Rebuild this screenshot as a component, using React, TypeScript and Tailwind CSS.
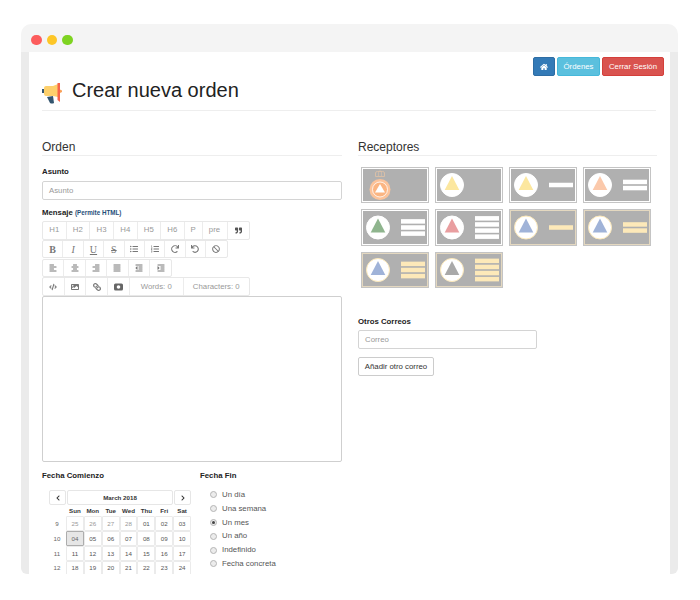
import {
  FaAlignCenter,
  FaAlignJustify,
  FaAlignLeft,
  FaAlignRight,
  FaBan,
  FaChevronLeft,
  FaChevronRight,
  FaCode,
  FaHome,
  FaImage,
  FaIndent,
  FaLink,
  FaListOl,
  FaListUl,
  FaOutdent,
  FaQuoteRight,
  FaRedo,
  FaUndo,
} from "react-icons/fa";
import type { ReactNode } from "react";

const sans = "font-['Liberation_Sans',Arial,sans-serif]";
const serif = "font-['Liberation_Serif',serif]";

function Megaphone() {
  return (
    <svg width="21" height="22" viewBox="0 0 21 22">
      <path d="M5 15 L11 14 L12 21 Q10 22 8 21 Z" fill="#34566f" />
      <path d="M0 7 L2 7 L2 11 L0 11 Z" fill="#34566f" />
      <path d="M2 6 Q2 4 4 4 L11 4 L16 2 L16 15 L11 14 L4 14 Q2 14 2 12 Z" fill="#fdd06c" />
      <path d="M15.5 1 L18 1 L18 20 L15.5 18 Z" fill="#f7654a" />
      <path d="M18 7.5 L20 8.5 L20 10 L18 11 Z" fill="#f9a15a" />
    </svg>
  );
}

type SignProps = {
  tri: string;
  bars: number;
  bar?: string;
  frame?: string;
  ring?: string;
  crown?: boolean;
  tall?: boolean;
};

function Sign({ tri, bars, bar = "#fff", frame = "#fff", ring = "#fff", crown, tall }: SignProps) {
  const h = tall ? 37 : 36;
  const total = bars * 4.5 + (bars - 1) * 1.6;
  const start = h / 2 - total / 2;
  const c = h / 2;
  return (
    <svg width="68" height={h} viewBox={`0 0 68 ${h}`} className="block">
      <rect x="0.5" y="0.5" width="67" height={h - 1} fill="#b0b0b0" stroke="#c4c4c4" />
      <rect x="1.5" y="1.5" width="65" height={h - 3} fill="#b0b0b0" stroke={frame} />
      {crown ? (
        <>
          <circle cx="19" cy="22.5" r="10.5" fill="#fcc39a" />
          <circle cx="19" cy="22.5" r="7.5" fill="#fbb582" stroke="#fff" strokeWidth="0.8" />
          <path d="M19 17 L24 25.5 L14 25.5 Z" fill="#fff" />
          <path d="M14.5 9.5 L14.5 6 Q14.5 4.5 16.5 4.5 L21.5 4.5 Q23.5 4.5 23.5 6 L23.5 9.5 Z" fill="none" stroke="#d8bfa8" />
          <path d="M17.5 5 L17.5 9 M20.5 5 L20.5 9 M19 4.5 L19 2.5" stroke="#d8bfa8" strokeWidth="0.7" />
        </>
      ) : (
        <>
          <circle cx="17" cy={c} r="11.5" fill="#fff" stroke={ring} />
          <path d={`M17 ${c - 9} L24.3 ${c + 5} L9.7 ${c + 5} Z`} fill={tri} />
        </>
      )}
      {Array.from({ length: bars }).map((_, i) => (
        <rect key={i} x="40" y={start + i * 6.1} width="24" height="4.5" fill={bar} />
      ))}
    </svg>
  );
}

const cream = "#fde9b9";

const signs: SignProps[] = [
  { tri: "", bars: 0, crown: true },
  { tri: "#fce79f", bars: 0 },
  { tri: "#fce79f", bars: 1 },
  { tri: "#fbc9ab", bars: 2 },
  { tri: "#8fb58e", bars: 3, tall: true },
  { tri: "#e99ea0", bars: 4, tall: true },
  { tri: "#a0b3d8", bars: 1, bar: cream, frame: "#e4d8c0", ring: cream, tall: true },
  { tri: "#a0b3d8", bars: 2, bar: cream, frame: "#e4d8c0", ring: cream, tall: true },
  { tri: "#a0b3d8", bars: 3, bar: cream, frame: "#e4d8c0", ring: cream },
  { tri: "#a9a9a9", bars: 4, bar: cream, frame: "#e4d8c0", ring: cream },
];

function Tool({ w, children }: { w: string; children: ReactNode }) {
  return (
    <div className={`${w} flex items-center justify-center h-full border-r border-[#ececec] last:border-r-0 text-[7.8px] text-[#999]`}>
      {children}
    </div>
  );
}

function ToolRow({ children }: { children: ReactNode }) {
  return <div className="flex w-fit h-[18.5px] border border-[#e8e8e8] rounded-[2px] bg-white">{children}</div>;
}

const icon = "text-[8px] text-[#777]";
const letter = `${serif} text-[10px] text-[#777]`;

const weeks = [
  { n: 9, days: ["25", "26", "27", "28", "01", "02", "03"] },
  { n: 10, days: ["04", "05", "06", "07", "08", "09", "10"] },
  { n: 11, days: ["11", "12", "13", "14", "15", "16", "17"] },
  { n: 12, days: ["18", "19", "20", "21", "22", "23", "24"] },
];

const heads = ["Sun", "Mon", "Tue", "Wed", "Thu", "Fri", "Sat"];

const options = ["Un día", "Una semana", "Un mes", "Un año", "Indefinido", "Fecha concreta"];

function Calendar() {
  return (
    <div className="ml-[7px] mt-[9px] w-[142px]">
      <div className="flex gap-[1px] h-[15px] text-[#333]">
        <div className="w-[17px] border border-[#e6e6e6] rounded-[2px] flex items-center justify-center">
          <FaChevronLeft className="text-[6px]" />
        </div>
        <div className="flex-1 border border-[#e6e6e6] rounded-[2px] flex items-center justify-center text-[6.2px] font-bold">
          March 2018
        </div>
        <div className="w-[17px] border border-[#e6e6e6] rounded-[2px] flex items-center justify-center">
          <FaChevronRight className="text-[6px]" />
        </div>
      </div>
      <div className="flex h-[11px] items-center text-[6.2px] font-bold text-[#333]">
        <div className="w-[17px]" />
        {heads.map((d) => (
          <div key={d} className="w-[17.86px] text-center">
            {d}
          </div>
        ))}
      </div>
      {weeks.map((w) => (
        <div key={w.n} className="flex h-[14.9px] items-center text-[6.2px]">
          <div className="w-[17px] text-center pr-[1px] text-[#666]">{w.n}</div>
          {w.days.map((d, i) => {
            const muted = w.n === 9 && i < 4;
            const active = w.n === 10 && i === 0;
            return (
              <div
                key={d}
                className={`w-[17.86px] h-[14.9px] flex items-center justify-center border rounded-[1px] ${
                  active ? "bg-[#e6e6e6] border-[#adadad] text-[#666]" : "border-[#ebebeb] bg-white"
                } ${muted ? "text-[#999]" : "text-[#555]"}`}
              >
                {d}
              </div>
            );
          })}
        </div>
      ))}
    </div>
  );
}

export default function App() {
  return (
    <div className={`${sans} w-[700px] h-[600px] bg-white pt-[24px] pl-[21px] overflow-hidden`}>
      <div className="w-[657px] h-[550px] flex flex-col rounded-t-[10px] rounded-b-[6px] overflow-hidden">
        <div className="h-[28px] shrink-0 bg-[#f4f4f4] flex items-center pl-[10px] pt-[4px] gap-[5px]">
          <span className="w-[10.5px] h-[10.5px] rounded-full bg-[#fc5c5c]" />
          <span className="w-[10.5px] h-[10.5px] rounded-full bg-[#fdc627]" />
          <span className="w-[10.5px] h-[10.5px] rounded-full bg-[#7ed321]" />
        </div>
        <div className="flex-1 min-h-0 border-x-[8px] border-x-[#ebebeb] bg-white overflow-hidden pl-[13px] pr-[14px]">
          {/* Top buttons */}
          <div className="flex justify-end gap-[2px] pt-[5px] -mr-[8px] text-[7.8px] text-white h-[24px]">
            <div className="w-[22px] h-[19px] rounded-[2px] bg-[#337ab7] border border-[#2e6da4] flex items-center justify-center">
              <FaHome className="text-[8px]" />
            </div>
            <div className="w-[43px] h-[19px] rounded-[2px] bg-[#5bc0de] border border-[#46b8da] flex items-center justify-center">
              Órdenes
            </div>
            <div className="w-[62px] h-[19px] rounded-[2px] bg-[#d9534f] border border-[#d43f3a] flex items-center justify-center">
              Cerrar Sesión
            </div>
          </div>

          {/* Page title */}
          <div className="flex items-center h-[33px] border-b border-[#eeeeee] pb-[1px] box-content">
            <Megaphone />
            <h1 className="ml-[9px] mb-[5px] text-[20px] leading-none text-[#222]">Crear nueva orden</h1>
          </div>

          <div className="flex gap-[16px] mt-[29px]">
            {/* Left column */}
            <div className="w-[300px] shrink-0">
              <h2 className="text-[12px] leading-[14px] h-[15px] text-[#333] border-b border-[#eeeeee] box-content">Orden</h2>
              <label className="block mt-[11px] text-[7.8px] leading-[10px] font-bold text-[#222]">Asunto</label>
              <div className="mt-[4px] h-[19px] border border-[#d4d4d4] rounded-[2px] px-[6px] flex items-center text-[7.8px] text-[#999]">
                Asunto
              </div>
              <label className="block mt-[8px] text-[7.8px] leading-[10px] font-bold text-[#222]">
                Mensaje <span className="text-[6.3px] text-[#1f4e79]">(Permite HTML)</span>
              </label>
              <div className="mt-[3px] flex flex-col gap-[0.25px]">
                <ToolRow>
                  <Tool w="w-[23.5px]">H1</Tool>
                  <Tool w="w-[23.5px]">H2</Tool>
                  <Tool w="w-[24px]">H3</Tool>
                  <Tool w="w-[23.5px]">H4</Tool>
                  <Tool w="w-[23.5px]">H5</Tool>
                  <Tool w="w-[23.5px]">H6</Tool>
                  <Tool w="w-[18px]">P</Tool>
                  <Tool w="w-[25px]">pre</Tool>
                  <Tool w="w-[21px]"><FaQuoteRight className="text-[7px] text-[#555]" /></Tool>
                </ToolRow>
                <ToolRow>
                  <Tool w="w-[20.4px]"><span className={`${letter} font-bold`}>B</span></Tool>
                  <Tool w="w-[20.4px]"><span className={`${letter} italic`}>I</span></Tool>
                  <Tool w="w-[20.4px]"><span className={`${letter} underline`}>U</span></Tool>
                  <Tool w="w-[20.4px]"><span className={`${letter} line-through`}>S</span></Tool>
                  <Tool w="w-[20.4px]"><FaListUl className={icon} /></Tool>
                  <Tool w="w-[20.4px]"><FaListOl className={icon} /></Tool>
                  <Tool w="w-[20.4px]"><FaRedo className={icon} /></Tool>
                  <Tool w="w-[20.4px]"><FaUndo className={icon} /></Tool>
                  <Tool w="w-[20.4px]"><FaBan className={icon} /></Tool>
                </ToolRow>
                <ToolRow>
                  <Tool w="w-[21.4px]"><FaAlignLeft className={icon} /></Tool>
                  <Tool w="w-[21.4px]"><FaAlignCenter className={icon} /></Tool>
                  <Tool w="w-[21.4px]"><FaAlignRight className={icon} /></Tool>
                  <Tool w="w-[21.4px]"><FaAlignJustify className={icon} /></Tool>
                  <Tool w="w-[21.4px]"><FaOutdent className={icon} /></Tool>
                  <Tool w="w-[21.4px]"><FaIndent className={icon} /></Tool>
                </ToolRow>
                <ToolRow>
                  <Tool w="w-[21.7px]"><FaCode className={icon} /></Tool>
                  <Tool w="w-[21.7px]"><FaImage className={icon} /></Tool>
                  <Tool w="w-[21.7px]"><FaLink className={`${icon} -scale-x-100`} /></Tool>
                  <Tool w="w-[21.7px]">
                    <svg width="9" height="8" viewBox="0 0 9 8">
                      <rect x="0" y="0.5" width="9" height="7" rx="1.5" fill="#666" />
                      <circle cx="4.5" cy="4" r="1.8" fill="#fff" />
                    </svg>
                  </Tool>
                  <Tool w="w-[54px]">Words: 0</Tool>
                  <Tool w="w-[65px]">Characters: 0</Tool>
                </ToolRow>
              </div>
              <div className="mt-[0.25px] h-[166px] border border-[#cfcfcf] rounded-[2px] bg-white" />
              <div className="flex mt-[9px]">
                <div className="w-[158px]">
                  <label className="block text-[7.8px] leading-[10px] font-bold text-[#222]">Fecha Comienzo</label>
                  <Calendar />
                </div>
                <div>
                  <label className="block text-[7.8px] leading-[10px] font-bold text-[#222]">Fecha Fin</label>
                  <div className="mt-[7px] ml-[10px] flex flex-col">
                    {options.map((o) => (
                      <div key={o} className="flex items-center h-[13.8px] gap-[5px] text-[7.8px] text-[#555]">
                        <span className="w-[7px] h-[7px] rounded-full border border-[#b5b5b5] bg-[#ececec] flex items-center justify-center">
                          {o === "Un mes" && <span className="w-[3px] h-[3px] rounded-full bg-[#444]" />}
                        </span>
                        {o}
                      </div>
                    ))}
                  </div>
                </div>
              </div>
            </div>

            {/* Right column */}
            <div className="w-[299px] shrink-0">
              <h2 className="text-[12px] leading-[14px] h-[15px] text-[#333] border-b border-[#eeeeee] box-content">Receptores</h2>
              <div className="grid grid-cols-[repeat(4,68px)] gap-x-[6px] gap-y-[6px] mt-[11px] ml-[3px]">
                {signs.map((s, i) => (
                  <Sign key={i} {...s} />
                ))}
              </div>
              <label className="block mt-[29px] text-[7.8px] leading-[10px] font-bold text-[#222]">Otros Correos</label>
              <div className="mt-[3px] w-[179px] h-[19px] border border-[#d4d4d4] rounded-[2px] px-[6px] flex items-center text-[7.8px] text-[#999]">
                Correo
              </div>
              <div className="mt-[8px] w-[76px] h-[19px] border border-[#cccccc] rounded-[2px] flex items-center justify-center text-[7.8px] text-[#333]">
                Añadir otro correo
              </div>
            </div>
          </div>
        </div>
      </div>
    </div>
  );
}
